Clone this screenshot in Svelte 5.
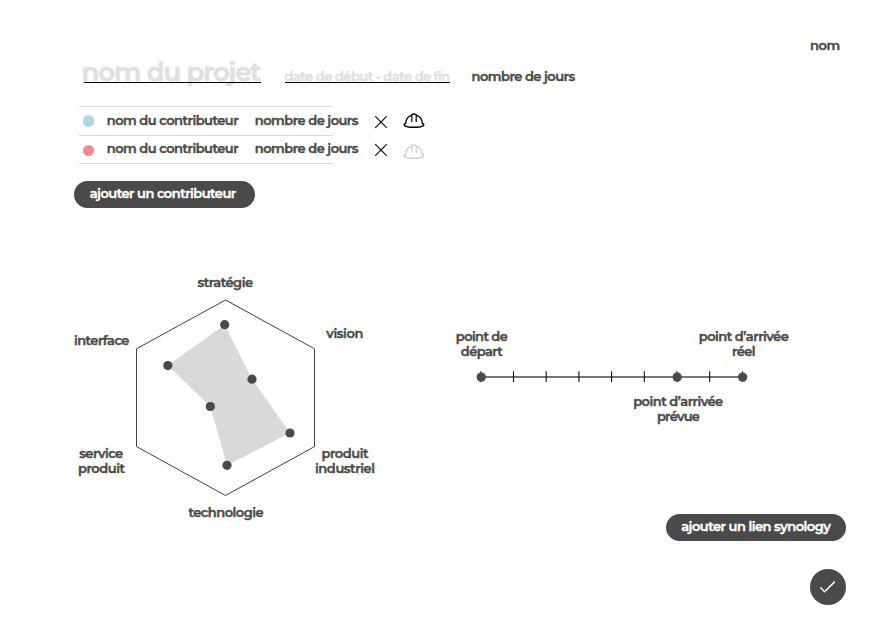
<script>
  const contributors = [
    { color: '#b0d7de', helmet: '#000', name: 'nom du contributeur', days: 'nombre de jours', dotY: 0.6, textY: -0.5 },
    { color: '#f58a8a', helmet: '#d0d0d0', name: 'nom du contributeur', days: 'nombre de jours', dotY: 3, textY: -1 },
  ];

  const axes = [
    { text: 'stratégie', x: 225.3, y: 287, w: 55.5 },
    { text: 'vision', x: 344.8, y: 338.4, w: 37 },
    { text: 'produit', x: 345, y: 458, w: 47 },
    { text: 'industriel', x: 345, y: 472.5, w: 60 },
    { text: 'technologie', x: 226, y: 517.4, w: 75 },
    { text: 'service', x: 101.2, y: 458, w: 44 },
    { text: 'produit', x: 101.5, y: 472.5, w: 47 },
    { text: 'interface', x: 101.7, y: 344.6, w: 55.5 },
  ];

  const values = [
    [224.7, 324.7],
    [252, 379.2],
    [290, 433],
    [227, 465.3],
    [210.3, 406.5],
    [167.8, 365.6],
  ];

  const milestones = [
    { text: 'point de', x: 481.8, y: 341.2, w: 52 },
    { text: 'départ', x: 481.8, y: 355.7, w: 42 },
    { text: 'point d’arrivée', x: 743.8, y: 341.2, w: 90 },
    { text: 'réel', x: 743.7, y: 355.7, w: 23.5 },
    { text: 'point d’arrivée', x: 678.2, y: 406.2, w: 90 },
    { text: 'prévue', x: 678.4, y: 420.7, w: 43 },
  ];

  const ticks = Array.from({ length: 9 }, (_, i) => 480.8 + i * 32.7);
  const stops = [481.2, 677.2, 742.6];
</script>

{#snippet labels(items)}
  {#each items as l}
    <text x={l.x} y={l.y} textLength={l.w} text-anchor="middle">{l.text}</text>
  {/each}
{/snippet}

<main>
  <div class="user"><span>nom</span></div>

  <header>
    <h1>nom du projet</h1>
    <span class="dates">date de début - date de fin</span>
    <span class="days">nombre de jours</span>
  </header>

  <ul>
    {#each contributors as c}
      <li>
        <i class="dot" style:background={c.color} style:margin-top="{c.dotY}px"></i>
        <span class="name" style:margin-top="{c.textY * 2}px">{c.name}</span>
        <span class="count" style:margin-top="{c.textY * 2}px">{c.days}</span>
        <svg class="cross" viewBox="0 0 14 14" width="14" height="14">
          <path d="M1.2 1.2 12.8 12.8M12.8 1.2 1.2 12.8" stroke="#000" stroke-width="1.1" />
        </svg>
        <svg class="helmet" viewBox="0 0 22 16" width="22" height="16" style:margin-top="{c.dotY * 1.8}px" fill="none" stroke={c.helmet} stroke-width="1.4" stroke-linejoin="round" stroke-linecap="round">
          <path d="M2.6 10.5C3 6 5.2 3.4 8.4 2.4 8.7 1.4 9.6 1 11 1s2.3.4 2.6 1.4c3.2 1 5.4 3.6 5.8 8.1M2.6 10.5C1.6 10.8 1 11.3 1.3 12.2 3.8 15 18.2 15 20.7 12.2c.3-.9-.3-1.4-1.3-1.7" />
          <path d="M8.8 2.4V8.6M13.2 2.4V8.6" stroke-width="1.2" />
        </svg>
      </li>
    {/each}
  </ul>

  <button class="pill add">ajouter un contributeur</button>

  <section>
    <svg class="radar" viewBox="70 270 320 255" width="320" height="255">
      <polygon points="225.5,300 314.5,348.8 314.5,446.6 225.5,495.5 136.5,446.6 136.5,348.8" fill="none" stroke="#3f3f3f" stroke-width="1" />
      <polygon points={values.map((v) => v.join(',')).join(' ')} fill="#d9d9d9" />
      {#each values as [x, y]}
        <circle cx={x} cy={y} r="4.6" />
      {/each}
      {@render labels(axes)}
    </svg>

    <svg class="timeline" viewBox="450 325 350 105" width="350" height="105">
      <path d="M481 377H743" stroke="#4a4a4a" stroke-width="1.4" />
      {#each ticks as x}
        <path d="M{x} 371.2V382" stroke="#111" stroke-width="1.1" />
      {/each}
      {#each stops as x}
        <circle cx={x} cy="377.1" r="4.7" />
      {/each}
      {@render labels(milestones)}
    </svg>
  </section>

  <footer>
    <button class="pill link">ajouter un lien synology</button>
    <button class="ok" aria-label="valider">
      <svg viewBox="0 0 36 36" width="36" height="36">
        <path d="M10.4 18.5 14.6 22.8 24.8 12.6" fill="none" stroke="#fff" stroke-width="1.5" />
      </svg>
    </button>
  </footer>
</main>

<style>
  :global(body) { background: #fff; }
  main {
    box-sizing: border-box;
    width: 886px;
    height: 620px;
    overflow: hidden;
    font: 600 13px/16px Montserrat, Inter, sans-serif;
    letter-spacing: -0.5px;
    -webkit-text-stroke: 0.4px currentColor;
    color: #4a4a4a;
    white-space: nowrap;
  }
  .user { display: flex; justify-content: flex-end; padding: 37px 46.2px 1px 0; letter-spacing: -0.4px; }
  header { display: flex; align-items: baseline; height: 52px; padding-left: 81.5px; }
  h1, .dates { position: relative; margin: 0; color: #e0e0e0; }
  h1 { width: 179.5px; font-size: 26px; font-weight: 600; line-height: 36px; letter-spacing: -1px; -webkit-text-stroke-width: 0.7px; }
  .dates { width: 165px; margin-left: 23.5px; }
  h1::after, .dates::after {
    content: '';
    position: absolute;
    left: 0;
    right: 0;
    height: 1px;
    background: #000;
  }
  h1::after { left: 2.5px; right: 0.5px; top: 28px; }
  .dates::after { top: 14px; }
  .days { margin-left: 22px; }
  ul { width: 254px; margin: 0 0 0 79px; padding: 0; list-style: none; border-top: 1px solid #d9d9d9; }
  li { display: flex; align-items: center; box-sizing: border-box; height: 28.5px; border-bottom: 1px solid #d9d9d9; }
  li > * { flex: none; }
  .dot { width: 11.4px; height: 11.4px; border-radius: 50%; margin-left: 4.1px; }
  .name { width: 148px; margin-left: 12.3px; }
  .count { width: 103px; }
  .cross { margin: 2px 0 0 16.2px; }
  .helmet { margin-left: 14.6px; }
  .pill {
    display: flex;
    align-items: center;
    height: 26.5px;
    padding: 0 0 2px 15.7px;
    border: 0;
    border-radius: 14px;
    background: #4a4a4a;
    color: #fff;
    font: inherit;
    letter-spacing: -0.5px;
  }
  .add { width: 181px; margin: 17px 0 0 74px; }
  section { display: flex; align-items: flex-start; gap: 60px; margin: 62.5px 0 0 70px; height: 244px; }
  section svg { overflow: visible; letter-spacing: 0; }
  .timeline { margin-top: 55px; }
  text, circle { fill: #4a4a4a; }
  text { stroke: #4a4a4a; stroke-width: 0.4px; }
  footer { display: flex; flex-direction: column; align-items: flex-end; gap: 28px; padding-right: 40px; }
  .link { width: 180.5px; }
  .ok { display: flex; width: 36px; height: 36px; padding: 0; border: 0; border-radius: 50%; background: #4a4a4a; }
</style>
